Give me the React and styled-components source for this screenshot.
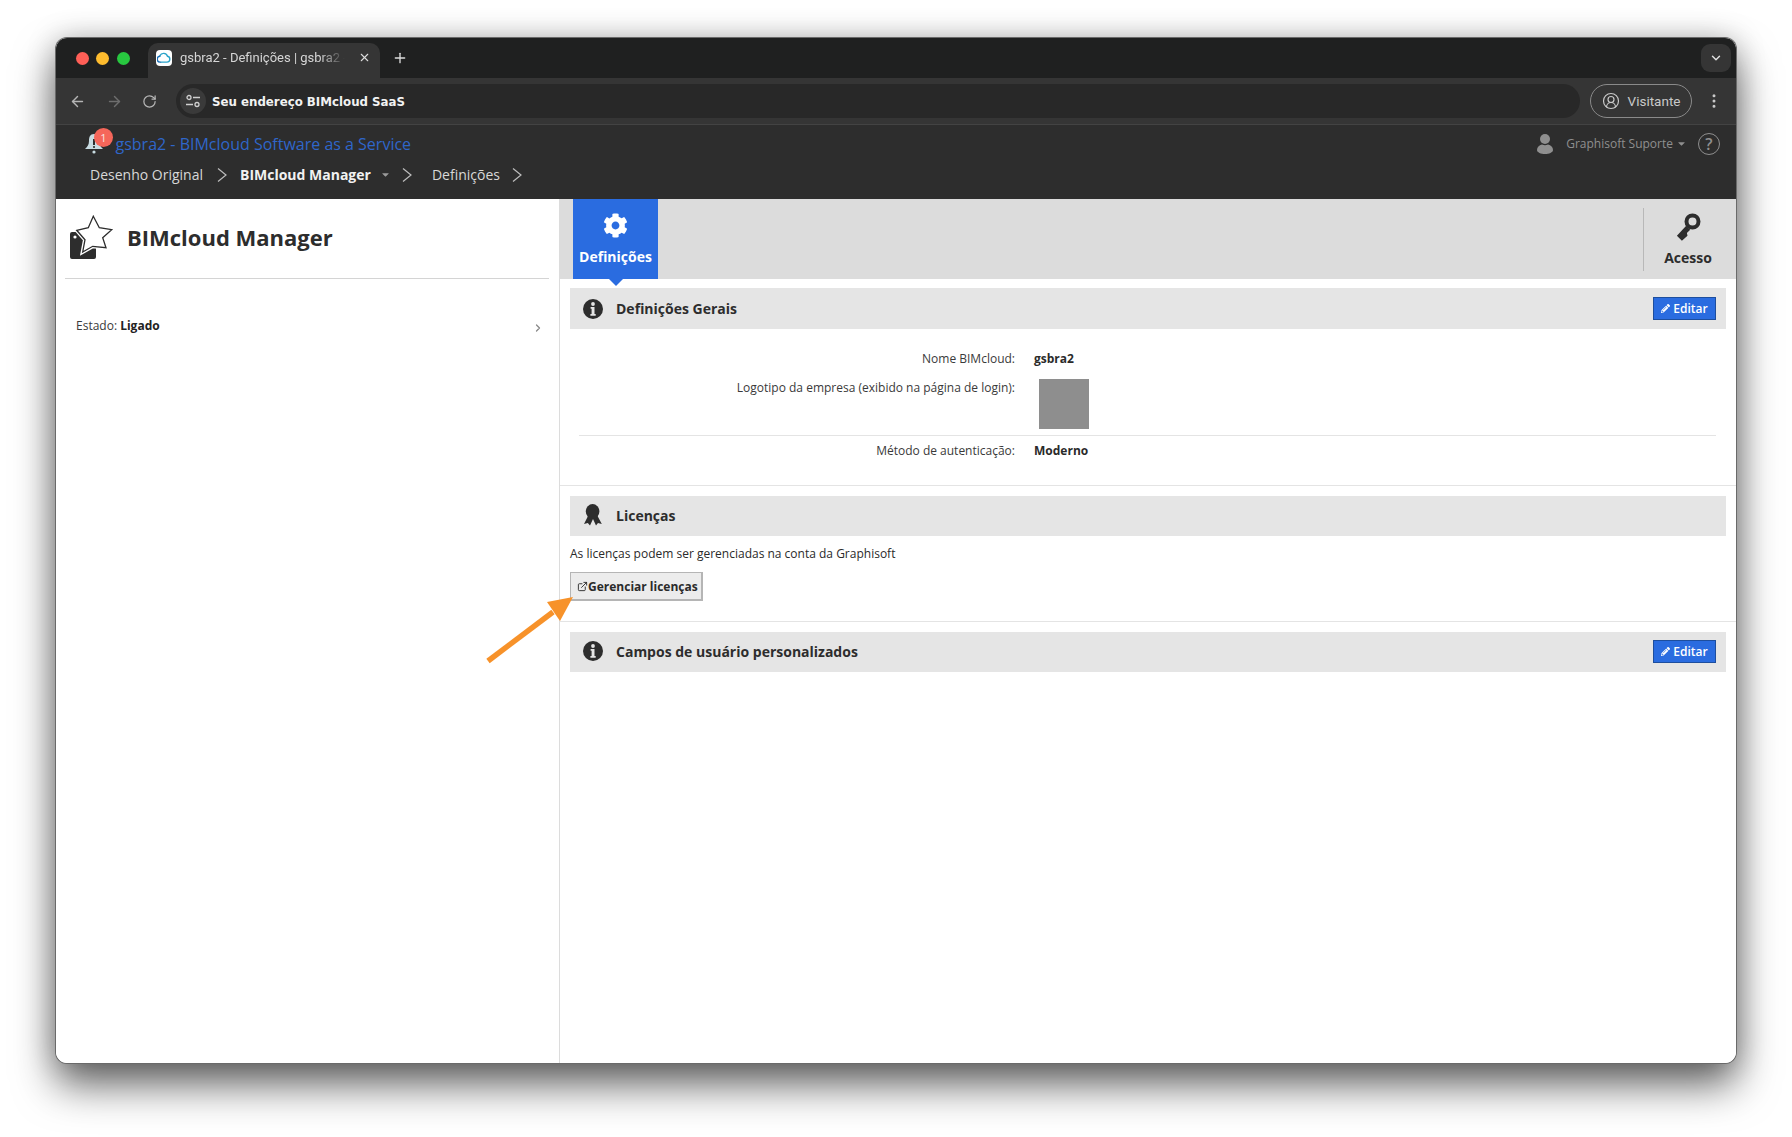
import React from "react";
import styled, { createGlobalStyle } from "styled-components";
import { ArrowLeft, ArrowRight, RotateCw, X, Plus, ChevronDown, ChevronRight, CircleUserRound, EllipsisVertical, ExternalLink } from "lucide-react";
import { FaCog, FaPencilAlt, FaCaretDown } from "react-icons/fa";

const Global = createGlobalStyle`
  html, body { margin: 0; padding: 0; background: #fff; }
  * { box-sizing: border-box; }
  body { font-family: "Open Sans", "Liberation Sans", sans-serif; color: #2d2d2d; }
`;

const Page = styled.div`
  width: 1792px;
  height: 1137px;
  padding: 38px 56px 0;
  overflow: hidden;
  position: relative;
`;
const WindowShadow = styled.div`
  border-radius: 11px;
  width: 1680px;
  height: 1025px;
  box-shadow: 0 0 0 1px #6a6a6a, 0 22px 42px 0 rgba(0,0,0,.6), 0 0 30px rgba(0,0,0,.22);
`;
const Window = styled.div`
  width: 1680px;
  height: 1025px;
  border-radius: 11px;
  overflow: hidden;
  background: #fff;
  display: flex;
  flex-direction: column;
`;
const TabStrip = styled.div`
  height: 40px;
  background: #1f2020;
  display: flex;
  align-items: flex-end;
  padding-left: 19.5px;
  color: #dcdcdc;
  flex: none;
`;
const Lights = styled.div`
  display: flex;
  gap: 7.5px;
  align-self: center;
  margin-right: 18.5px;
`;
const Light = styled.span`
  width: 13px;
  height: 13px;
  border-radius: 50%;
  background: ${p => p.$c};
`;
const Tab = styled.div`
  width: 232px;
  height: 35px;
  background: #353535;
  border-radius: 10px 10px 0 0;
  display: flex;
  align-items: center;
  padding: 0 9px 6px 8px;
  gap: 8px;
  font: 13px Roboto, sans-serif;
  white-space: nowrap;
`;
const Favicon = styled.span`
  width: 16px;
  height: 16px;
  border-radius: 4px;
  background: #fff;
  display: flex;
  align-items: center;
  justify-content: center;
  flex: none;
`;
const TabTitle = styled.span`
  flex: 1;
  color: #d6d6d6;
  -webkit-mask-image: linear-gradient(90deg, #000 140px, transparent 165px);
  mask-image: linear-gradient(90deg, #000 140px, transparent 165px);
`;
const NewTab = styled.span`
  margin: 0 0 5px 12px;
  display: flex;
  align-items: center;
  height: 30px;
`;
const StripEnd = styled.span`
  margin: 0 5px 6px auto;
  width: 30px;
  height: 28px;
  border-radius: 9px;
  background: #353535;
  display: flex;
  align-items: center;
  justify-content: center;
`;
const Toolbar = styled.div`
  height: 46px;
  background: #353535;
  display: flex;
  align-items: center;
  padding: 0 13px;
  color: #b5b5b5;
  flex: none;
`;
const NavIcons = styled.div`
  display: flex;
  gap: 19.5px;
  align-items: center;
  margin-right: 19px;
`;
const Omnibox = styled.div`
  flex: 1;
  height: 34px;
  background: #282828;
  border-radius: 17px;
  display: flex;
  align-items: center;
  padding-left: 4px;
  gap: 6px;
`;
const Tune = styled.span`
  width: 26px;
  height: 26px;
  border-radius: 50%;
  background: #3a3a3a;
  display: flex;
  align-items: center;
  justify-content: center;
`;
const Url = styled.span`
  font: bold 11.8px "DejaVu Sans", sans-serif;
  color: #f2f2f2;
  margin-top: 1px;
`;
const Guest = styled.div`
  width: 102px;
  height: 34px;
  margin-left: 10px;
  border: 1px solid #8a8a8a;
  border-radius: 17px;
  display: flex;
  align-items: center;
  justify-content: center;
  gap: 8px;
  font: 13.5px Roboto, sans-serif;
  color: #c9c9c9;
`;
const Kebab = styled.span`
  margin-left: 13px;
  display: flex;
  color: #c9c9c9;
`;
const AppHeader = styled.div`
  height: 75px;
  background: #2d2d2d;
  border-top: 1px solid #434343;
  display: flex;
  flex-direction: column;
  flex: none;
`;
const HeaderTop = styled.div`
  display: flex;
  align-items: center;
  height: 36px;
  padding: 1px 16px 0 28px;
`;
const BellWrap = styled.span`
  position: relative;
  display: flex;
  width: 31.5px;
`;
const Badge = styled.span`
  position: absolute;
  left: 10px;
  top: -5px;
  width: 19px;
  height: 19px;
  border-radius: 50%;
  background: #f5665a;
  color: #f8e4e0;
  font-size: 11px;
  text-align: center;
  line-height: 19px;
`;
const AppTitle = styled.span`
  font-size: 16px;
  color: #2f66c9;
`;
const UserMenu = styled.div`
  margin-left: auto;
  display: flex;
  align-items: center;
  color: #8f8f8f;
  font-size: 12px;
`;
const UserName = styled.span`
  margin: 0 2.5px 0 13px;
`;
const Help = styled.span`
  width: 22px;
  height: 22px;
  margin-left: 11.5px;
  border: 1.5px solid #8f8f8f;
  border-radius: 50%;
  display: flex;
  align-items: center;
  justify-content: center;
  font-size: 16px;
  font-weight: 600;
`;
const Crumbs = styled.div`
  display: flex;
  align-items: center;
  height: 27px;
  padding-left: 34px;
  color: #dedede;
  font-size: 14px;
`;
const Crumb = styled.span`
  font-weight: ${p => (p.$bold ? 700 : 400)};
  color: ${p => (p.$bold ? "#f1f1f1" : "#d8d8d8")};
`;
const CrumbCaret = styled.span`
  display: flex;
  margin-left: 9px;
  color: #9a9a9a;
`;
const CrumbSep = styled.svg`
  width: 10px;
  height: 16px;
  flex: none;
  margin: 1px ${p => p.$after || 0}px 0 ${p => p.$before || 0}px;
  fill: none;
  stroke: #bdbdbd;
  stroke-width: 1.2;
`;
const Body = styled.div`
  flex: 1;
  display: flex;
  min-height: 0;
`;
const Side = styled.aside`
  width: 504px;
  flex: none;
  border-right: 1px solid #dcdcdc;
  padding: 0 10px 0 9px;
`;
const Brand = styled.div`
  height: 80px;
  border-bottom: 1px solid #d4d4d4;
  display: flex;
  align-items: center;
  padding: 0 0 4px 4px;
  gap: 12px;
`;
const BrandName = styled.h1`
  margin: 0;
  font-size: 22px;
  font-weight: 700;
  color: #2d2d2d;
`;
const StateRow = styled.div`
  margin-top: 38px;
  padding: 0 5px 0 11px;
  display: flex;
  justify-content: space-between;
  align-items: center;
  font-size: 12px;
  color: #3a3a3a;
  b { color: #222; }
`;
const StateChevron = styled(ChevronRight)`
  margin-top: 5px;
  color: #888;
`;
const Main = styled.main`
  flex: 1;
  min-width: 0;
`;
const Tabs = styled.div`
  height: 80px;
  background: #dcdcdc;
  display: flex;
  justify-content: space-between;
  padding-left: 13px;
`;
const ActiveTab = styled.div`
  width: 85px;
  background: #2a6ce0;
  color: #fff;
  display: flex;
  flex-direction: column;
  align-items: center;
  padding-top: 14px;
  font-size: 14px;
  font-weight: 700;
  gap: 9px;
  position: relative;
  &::after {
    content: "";
    position: absolute;
    top: 100%;
    left: 50%;
    margin-left: -7px;
    border: 7px solid transparent;
    border-bottom: 0;
    border-top-color: #2a6ce0;
  }
`;
const AccessTab = styled.div`
  width: 93px;
  margin: 9px 0 8px;
  border-left: 1px solid #b8b8b8;
  display: flex;
  flex-direction: column;
  align-items: center;
  padding: 5px 4px 0 0;
  font-size: 14px;
  font-weight: 700;
  color: #2d2d2d;
  gap: 7px;
`;
const SectionHead = styled.div`
  height: ${p => p.$h || 41}px;
  margin: ${p => p.$top || 10}px 10px 0 10px;
  background: #e5e5e5;
  display: flex;
  align-items: center;
  padding: 0 10px ${p => (p.$h ? 2 : 0)}px 13px;
  gap: 13px;
  font-size: 14px;
  font-weight: 700;
  color: #2d2d2d;
`;
const EditBtn = styled.button`
  margin-left: auto;
  width: 63px;
  height: 23px;
  background: #2a6ce0;
  border: 1px solid #1d4e9e;
  color: #fff;
  font: 600 12px "Open Sans", sans-serif;
  display: flex;
  align-items: center;
  justify-content: center;
  gap: 3px;
  padding: 0;
`;
const Details = styled.div`
  padding: 17px 20px 0 19px;
  height: 157px;
  border-bottom: 1px solid #e4e4e4;
`;
const Row = styled.div`
  display: grid;
  grid-template-columns: 436px 1fr;
  column-gap: 19px;
  align-items: ${p => (p.$top ? "start" : "center")};
  font-size: 12px;
  min-height: ${p => p.$h}px;
  padding-bottom: ${p => p.$pb || 0}px;
  margin-bottom: ${p => p.$mb || 0}px;
  border-bottom: ${p => (p.$line ? "1px solid #e4e4e4" : "none")};
`;
const Label = styled.span`
  text-align: right;
  color: #3a3a3a;
`;
const Value = styled.b`
  color: #2a2a2a;
`;
const LogoBox = styled.div`
  width: 50px;
  height: 50px;
  margin-left: 5px;
  background: #8e8e8e;
`;
const LicenseBody = styled.div`
  height: 86px;
  padding: 9px 0 0 10px;
  border-bottom: 1px solid #e4e4e4;
  font-size: 12px;
  color: #2a2a2a;
`;
const ManageBtn = styled.button`
  margin-top: 10px;
  width: 133px;
  height: 29px;
  display: flex;
  align-items: center;
  padding: 0 0 0 6px;
  gap: 0;
  background: #ececec;
  border: 1px solid #b5b5b5;
  border-right-width: 2px;
  border-bottom-width: 2px;
  color: #2a2a2a;
  font: 700 12px "Open Sans", sans-serif;
`;
const Callout = styled.svg`
  position: absolute;
  left: 480px;
  top: 590px;
`;

const Cloud = () => (
  <svg width="14" height="14" viewBox="0 0 24 24" fill="none">
    <path d="M7 19h10a5 5 0 0 0 1-9.900A7 7 0 0 0 5 8" stroke="#2aa3c9" strokeWidth="2.4" strokeLinecap="round" />
    <path d="M5 9a5 5 0 0 0 1 10" stroke="#1b6fb5" strokeWidth="2.4" strokeLinecap="round" />
  </svg>
);
const TuneIcon = () => (
  <svg width="14" height="14" viewBox="0 0 14 14" fill="none" stroke="#d0d0d0" strokeWidth="1.3">
    <circle cx="3" cy="3.5" r="2" />
    <path d="M7 3.500h7M0 10.500h7" />
    <circle cx="11" cy="10.500" r="2" />
  </svg>
);
const BellIcon = () => (
  <svg width="20" height="21" viewBox="0 0 20 21">
    <path d="M10 1C6 1 5 4 5 8c0 4-2 6-4 8h18c-2-2-4-4-4-8 0-4-1-7-5-7z" fill="#c8dce2" />
    <rect x="9" y="6" width="2" height="6" fill="#2d2d2d" />
    <circle cx="10" cy="14" r="1.100" fill="#2d2d2d" />
    <circle cx="10" cy="19" r="1.600" fill="#c8dce2" />
  </svg>
);
const PersonIcon = () => (
  <svg width="16" height="20" viewBox="0 0 16 20" fill="#8f8f8f">
    <circle cx="8" cy="5" r="5" />
    <path d="M5 10.500C2 11.500 0 13 0 16c0 2.500 4 4 8 4s8-1.500 8-4c0-3-2-4.500-5-5.500-1.800 1-4.200 1-6 0z" />
  </svg>
);
const InfoIcon = () => (
  <svg width="20" height="20" viewBox="0 0 20 20">
    <circle cx="10" cy="10" r="10" fill="#2d2d2d" />
    <circle cx="10" cy="5" r="1.900" fill="#e5e5e5" />
    <path d="M7.600 8h3.900v7h1.200v1.700H7.400V15h1.200V9.700H7.600z" fill="#e5e5e5" />
  </svg>
);
const RibbonIcon = () => (
  <svg width="20" height="22" viewBox="0 0 20 22" fill="#2d2d2d">
    <ellipse cx="9.600" cy="7.500" rx="6.800" ry="7.500" />
    <path d="M5.500 11L1 20l3.800-1L7 21.500l3-6.500L13 21.500 15 19l3.800 1L14 11z" />
  </svg>
);
const KeyIcon = () => (
  <svg width="26" height="28" viewBox="0 0 26 28" fill="#2d2d2d">
    <path fillRule="evenodd" d="M17.500.500a8 8 0 1 1 0 16 8 8 0 0 1 0-16zm0 4a4 4 0 1 0 0 8 4 4 0 0 0 0-8z" />
    <path d="M11.200 12.800l4 4-3.300 3.300.6 2.700-5.600 5-5-5z" />
  </svg>
);
const BrandLogo = () => (
  <svg width="46" height="46" viewBox="0 0 46 46">
    <path d="M1 20a2 2 0 0 1 2-2h6.300L15 27l12 7v9a2 2 0 0 1-2 2H3a2 2 0 0 1-2-2z" fill="#2d2d2d" />
    <circle cx="6" cy="23" r="1.600" fill="#fff" />
    <path d="M24.300 2.300L30.300 13.700 42.700 15.700 33.700 23.700 37 33.700 23.700 32.300 13.700 38 16 25.700 7.700 16.300 19.300 13.700z" fill="#fff" stroke="#fff" strokeWidth="4" />
    <path d="M24.300 2.300L30.300 13.700 42.700 15.700 33.700 23.700 37 33.700 23.700 32.300 13.700 38 16 25.700 7.700 16.300 19.300 13.700z" fill="#fff" stroke="#2d2d2d" strokeWidth="1.300" />
  </svg>
);

const Sep = props => (
  <CrumbSep viewBox="0 0 10 16" {...props}>
    <path d="M1 1.500L9 8l-8 6.500" />
  </CrumbSep>
);

export default function App() {
  return (
    <>
      <Global />
      <Page>
        <WindowShadow>
          <Window>
            <TabStrip>
              <Lights>
                <Light $c="#ff5f57" />
                <Light $c="#febc2e" />
                <Light $c="#28c840" />
              </Lights>
              <Tab>
                <Favicon><Cloud /></Favicon>
                <TabTitle>gsbra2 - Definições | gsbra2 -</TabTitle>
                <X size={13} />
              </Tab>
              <NewTab><Plus size={16} /></NewTab>
              <StripEnd><ChevronDown size={14} strokeWidth={2.5} /></StripEnd>
            </TabStrip>
            <Toolbar>
              <NavIcons>
                <ArrowLeft size={17} />
                <ArrowRight size={17} color="#6e6e6e" />
                <RotateCw size={15} />
              </NavIcons>
              <Omnibox>
                <Tune><TuneIcon /></Tune>
                <Url>Seu endereço BIMcloud SaaS</Url>
              </Omnibox>
              <Guest><CircleUserRound size={18} strokeWidth={1.6} />Visitante</Guest>
              <Kebab><EllipsisVertical size={18} /></Kebab>
            </Toolbar>
            <AppHeader>
              <HeaderTop>
                <BellWrap>
                  <BellIcon />
                  <Badge>1</Badge>
                </BellWrap>
                <AppTitle>gsbra2 - BIMcloud Software as a Service</AppTitle>
                <UserMenu>
                  <PersonIcon />
                  <UserName>Graphisoft Suporte</UserName>
                  <FaCaretDown size={11} />
                  <Help>?</Help>
                </UserMenu>
              </HeaderTop>
              <Crumbs>
                <Crumb>Desenho Original</Crumb>
                <Sep $before={14} $after={13} />
                <Crumb $bold>BIMcloud Manager</Crumb>
                <CrumbCaret><FaCaretDown size={11} /></CrumbCaret>
                <Sep $before={11} $after={20} />
                <Crumb>Definições</Crumb>
                <Sep $before={12} />
              </Crumbs>
            </AppHeader>
            <Body>
              <Side>
                <Brand>
                  <BrandLogo />
                  <BrandName>BIMcloud Manager</BrandName>
                </Brand>
                <StateRow>
                  <span>Estado: <b>Ligado</b></span>
                  <StateChevron size={12} strokeWidth={2.5} />
                </StateRow>
              </Side>
              <Main>
                <Tabs>
                  <ActiveTab>
                    <FaCog size={25} />
                    Definições
                  </ActiveTab>
                  <AccessTab>
                    <KeyIcon />
                    Acesso
                  </AccessTab>
                </Tabs>
                <SectionHead $top={9}>
                  <InfoIcon />
                  Definições Gerais
                  <EditBtn><FaPencilAlt size={9} />Editar</EditBtn>
                </SectionHead>
                <Details>
                  <Row $h={25} $mb={8}><Label>Nome BIMcloud:</Label><Value>gsbra2</Value></Row>
                  <Row $top $h={57} $pb={6} $line>
                    <Label>Logotipo da empresa (exibido na página de login):</Label>
                    <LogoBox />
                  </Row>
                  <Row $h={28}><Label>Método de autenticação:</Label><Value>Moderno</Value></Row>
                </Details>
                <SectionHead $h={40}>
                  <RibbonIcon />
                  Licenças
                </SectionHead>
                <LicenseBody>
                  As licenças podem ser gerenciadas na conta da Graphisoft
                  <ManageBtn><ExternalLink size={11} />Gerenciar licenças</ManageBtn>
                </LicenseBody>
                <SectionHead $h={40}>
                  <InfoIcon />
                  Campos de usuário personalizados
                  <EditBtn><FaPencilAlt size={9} />Editar</EditBtn>
                </SectionHead>
              </Main>
            </Body>
          </Window>
        </WindowShadow>
        <Callout width="110" height="90" viewBox="0 0 110 90">
          <path d="M8 71L73 22" stroke="#f7922a" strokeWidth="5.500" />
          <path d="M93 7L67 12L80 31z" fill="#f7922a" />
        </Callout>
      </Page>
    </>
  );
}
